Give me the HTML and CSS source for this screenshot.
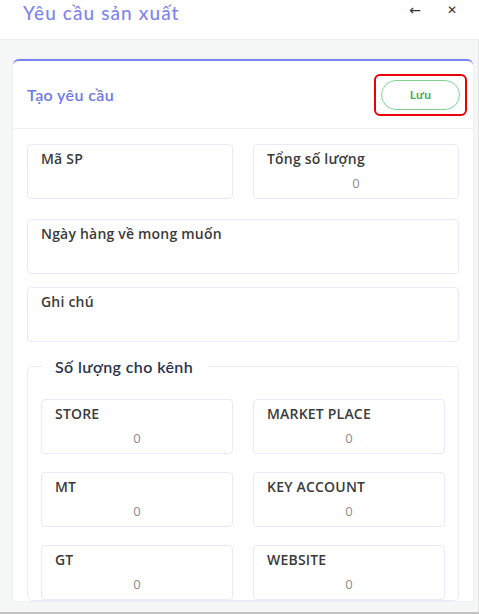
FILE: index.html
```html
<!DOCTYPE html>
<html lang="vi">
<head>
<meta charset="utf-8">
<title>Yêu cầu sản xuất</title>
<link rel="stylesheet" href="styles.css">
</head>
<body>
<div class="app">
  <header class="topbar">
    <h1 class="title">Yêu cầu sản xuất</h1>
    <div class="actions">
      <span class="icon">&#8592;</span>
      <span class="icon close">&#10005;</span>
    </div>
  </header>
  <main class="main">
    <section class="card">
      <div class="card-head">
        <h2 class="card-title">Tạo yêu cầu</h2>
        <div class="highlight"><button class="save">Lưu</button></div>
      </div>
      <div class="card-body">
        <div class="grid two">
          <div class="field"><div class="label">Mã SP</div><div class="value"></div></div>
          <div class="field"><div class="label">Tổng số lượng</div><div class="value">0</div></div>
        </div>
        <div class="field wide"><div class="label">Ngày hàng về mong muốn</div><div class="value"></div></div>
        <div class="field wide note"><div class="label">Ghi chú</div><div class="value"></div></div>
        <fieldset class="channels">
          <legend>Số lượng cho kênh</legend>
          <div class="grid two inner">
            <div class="field"><div class="label">STORE</div><div class="value">0</div></div>
            <div class="field"><div class="label">MARKET PLACE</div><div class="value">0</div></div>
            <div class="field"><div class="label">MT</div><div class="value">0</div></div>
            <div class="field"><div class="label">KEY ACCOUNT</div><div class="value">0</div></div>
            <div class="field"><div class="label">GT</div><div class="value">0</div></div>
            <div class="field"><div class="label">WEBSITE</div><div class="value">0</div></div>
          </div>
        </fieldset>
      </div>
    </section>
  </main>
</div>
</body>
</html>
```
FILE: styles.css
```css
* { box-sizing: border-box; }
html, body { margin: 0; padding: 0; }
body {
  font-family: "Open Sans", "Noto Sans", sans-serif;
  background: #f5f6f6;
  overflow: hidden;
}
.app {
  height: 614px;
  display: flex;
  flex-direction: column;
  border-bottom: 2px solid #c3c3c3;
}
.topbar {
  height: 40px;
  flex: 0 0 40px;
  background: #fff;
  border-bottom: 1px solid #ececec;
  display: flex;
  align-items: flex-start;
  justify-content: space-between;
  padding: 0 22px 0 23px;
}
.title {
  margin: 0;
  padding-top: 1px;
  font-family: "Lato", sans-serif;
  font-weight: 500;
  font-size: 19px;
  letter-spacing: 1.1px;
  color: #7d86ec;
  line-height: 24px;
}
.actions {
  display: flex;
  gap: 26px;
  padding-top: 1px;
}
.icon {
  font-family: "DejaVu Sans", sans-serif;
  font-size: 14px;
  color: #333;
  line-height: 18px;
}
.icon.close { font-size: 12px; }
.main {
  flex: 1;
  overflow: hidden;
  padding: 19px 6px 0 13px;
  border-right: 1px solid #e2e3e8;
}
.card {
  background: #fff;
  border-top: 2px solid #7a83f0;
  border-radius: 6px 6px 0 0;
  box-shadow: 0 0 0 1px #eef0f8;
  width: 460px;
}
.card-head {
  height: 68px;
  display: flex;
  align-items: center;
  justify-content: space-between;
  padding: 0 6px 0 14px;
  border-bottom: 1px solid #f1f1f4;
}
.card-title {
  margin: 0;
  font-family: "Lato", sans-serif;
  font-weight: 600;
  font-size: 16px;
  letter-spacing: 0.4px;
  color: #6f78e6;
}
.highlight {
  border: 2px solid #e8000b;
  border-radius: 6px;
  padding: 4px 5px;
  display: flex;
}
.save {
  width: 79px;
  height: 30px;
  border: 1px solid #82d494;
  border-radius: 15px;
  background: #fff;
  color: #3ab55a;
  font-family: "Lato", sans-serif;
  font-weight: 700;
  font-size: 12px;
  letter-spacing: 0.3px;
  padding: 0;
}
.card-body {
  padding: 15px 14px 0 14px;
}
.grid.two {
  display: grid;
  grid-template-columns: 1fr 1fr;
  column-gap: 20px;
}
.field {
  height: 55px;
  border: 1px solid #e9e9fb;
  border-radius: 4px;
  padding: 4px 13px 0 13px;
  background: #fff;
}
.label {
  font-size: 14px;
  font-weight: 600;
  color: #3b3b3b;
  line-height: 20px;
  letter-spacing: 0.2px;
}
.value {
  text-align: center;
  font-size: 13px;
  color: #8a8a8a;
  line-height: 18px;
  margin-top: 5px;
  height: 18px;
}
.wide { margin-top: 20px; }
.note { margin-top: 13px; }
.channels {
  margin: 15px 0 0 0;
  border: 1px solid #ececf8;
  border-radius: 5px;
  padding: 23px 13px 0 13px;
  min-width: 0;
}
.channels legend {
  margin-left: 1px;
  padding: 0 15px 0 13px;
  font-family: "Lato", sans-serif;
  font-weight: 600;
  font-size: 16px;
  letter-spacing: 0.4px;
  color: #2c3350;
}
.inner {
  row-gap: 18px;
}
```
